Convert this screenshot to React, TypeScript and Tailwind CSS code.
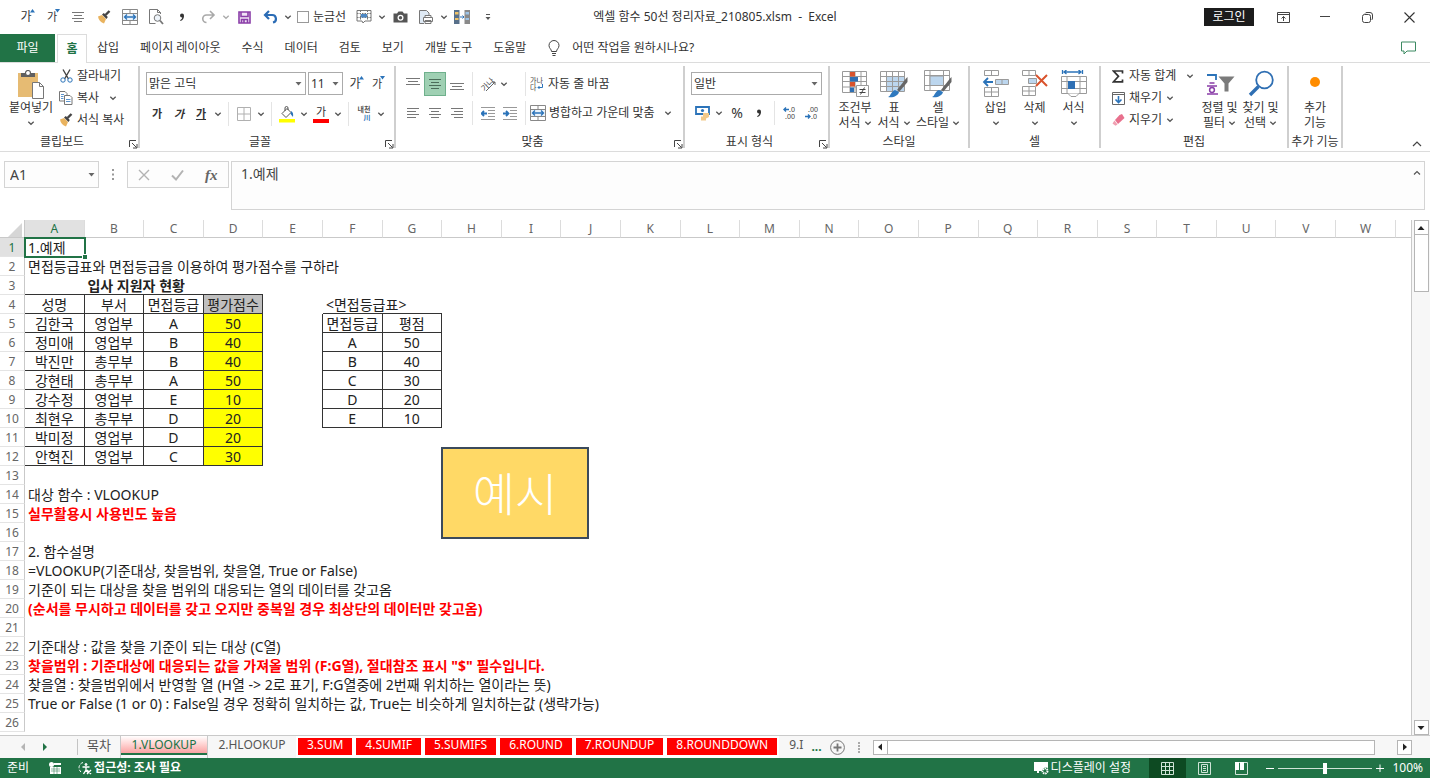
import React from 'react';
import { clsx } from 'clsx';

type Kids = { children?: React.ReactNode; className?: string };

/* ---------- small building blocks ---------- */

const Chevron = ({ up = false }: { up?: boolean }) => (
  <svg width="8" height="8" viewBox="0 0 8 8" fill="none" stroke="#555" strokeWidth="1.2" aria-hidden="true">
    <path d={up ? 'M1 5.5 4 2.5 7 5.5' : 'M1.3 2.7 4 5.3 6.7 2.7'} />
  </svg>
);

const Caret = () => (
  <svg width="7" height="4" viewBox="0 0 7 4" fill="#666" aria-hidden="true">
    <path d="M.5 0h6l-3 3.6z" />
  </svg>
);

const IconButton = ({ children, label, className }: Kids & { label: string }) => (
  <button type="button" aria-label={label} className={clsx('flex h-6 w-[22px] shrink-0 items-center justify-center', className)}>
    {children}
  </button>
);

const DropButton = ({ label, className = 'w-3' }: { label: string; className?: string }) => (
  <button type="button" aria-label={label} className={clsx('flex h-6 shrink-0 items-center justify-center', className)}>
    <Chevron />
  </button>
);

const Divider = () => <span className="mx-1 h-6 w-px shrink-0 bg-[#e4e4e4]" />;

const SelectBox = ({ label, value, className }: { label: string; value: string; className: string }) => (
  <div className={clsx('relative', className)}>
    <select aria-label={label} className="h-[23px] w-full appearance-none border border-[#ababab] bg-white pl-[2px] text-[#333]">
      <option>{value}</option>
    </select>
    <span className="pointer-events-none absolute top-[10px] right-1">
      <Caret />
    </span>
  </div>
);

const Group = ({ title, launcher = false, className, children }: Kids & { title: string; launcher?: boolean }) => (
  <section aria-label={title} className={clsx('flex h-[82px] shrink-0 flex-col border-r-2 border-[#cfcfcf]', className)}>
    <div className="flex-1">{children}</div>
    <div className="flex h-3 items-center">
      <span className="flex-1 text-center leading-3 whitespace-nowrap">{title}</span>
      {launcher && (
        <button type="button" aria-label={`${title} 설정`} className="flex w-[14px] justify-end pt-1">
          <svg width="9" height="9" viewBox="0 0 9 9" fill="none" stroke="#444">
            <path d="M.5 7V.5H7M3 3l4.500 4.500M8 4v4H4" />
          </svg>
        </button>
      )}
    </div>
  </section>
);

const BigButton = ({ icon, lines, arrow = 'none', className }: { icon: React.ReactNode; lines: string[]; arrow?: 'none' | 'inline' | 'below'; className: string }) => (
  <button type="button" className={clsx('flex shrink-0 flex-col items-center pt-[2px]', className)}>
    <span className="flex h-8 items-center justify-center">{icon}</span>
    {lines.map((line, i) => (
      <span key={line} className="flex h-[15px] items-center gap-[3px] leading-[15px] whitespace-nowrap">
        {line}
        {arrow === 'inline' && i === lines.length - 1 && <Chevron />}
      </span>
    ))}
    {arrow === 'below' && (
      <span className="flex h-[15px] items-center">
        <Chevron />
      </span>
    )}
  </button>
);

const RowButton = ({ icon, children, arrow = false, wide = false }: Kids & { icon: React.ReactNode; arrow?: boolean; wide?: boolean }) => (
  <button type="button" className="flex h-[18px] items-center whitespace-nowrap">
    <span className="mr-1 flex w-[14px] justify-center">{icon}</span>
    {children}
    {arrow && (
      <span className={wide ? 'ml-[10px]' : 'ml-1'}>
        <Chevron />
      </span>
    )}
  </button>
);

/* ---------- icons ---------- */

const GrowFont = ({ small = false }: { small?: boolean }) => (
  <span className="relative text-[#333]">
    <span className={small ? 'text-[11px]' : 'text-[12px]'}>가</span>
    <svg className="absolute top-0 -right-[3px]" width="5" height="4" viewBox="0 0 5 4" fill="#2b73b9">
      <path d={small ? 'M0 0h5L2.500 3.500z' : 'M2.500 0 5 3.500H0z'} />
    </svg>
  </span>
);

const Lines = ({ rows, stroke = '#777' }: { rows: number[][]; stroke?: string }) => (
  <svg width="14" height="14" viewBox="0 0 14 14" stroke={stroke} fill="none">
    {rows.map(([x1, x2, y]) => (
      <path key={y} d={`M${x1} ${y}.5H${x2}`} />
    ))}
  </svg>
);

const CommaIcon = () => (
  <svg width="6" height="9" viewBox="0 0 6 9" fill="#333">
    <circle cx="3" cy="2.500" r="2" />
    <path d="M5 2.500C5 5.500 4 7 1.500 8l-.4-.8C2.500 6.500 3.200 5.500 3.200 4z" />
  </svg>
);

const Brush = () => (
  <svg width="14" height="14" viewBox="0 0 14 14" fill="none">
    <path d="M1 6.500 5 5l4 4-2 4.500C4 12.500 1.500 10 1 6.500z" fill="#e9b35f" />
    <path d="m5 4.500 1.800-1.500 4 4L9.500 9z" fill="#444" />
    <path d="m8.500 5 4-4" stroke="#444" strokeWidth="2.400" />
  </svg>
);

const MergeIcon = () => (
  <svg width="16" height="16" viewBox="0 0 16 16" fill="none" stroke="#888">
    <path d="M.5.5h15v15H.5zM.5 4.500h15M.5 11.500h15M8 .5v4M8 11.500v4" />
    <rect x="1" y="5" width="14" height="6" fill="#eaf3fb" stroke="none" />
    <path d="M2.500 8h11M5 5.500 2.500 8 5 10.500M11 5.500 13.500 8 11 10.500" stroke="#2b73b9" strokeWidth="1.300" />
  </svg>
);

const PreviewIcon = () => (
  <svg width="16" height="16" viewBox="0 0 16 16" fill="none" stroke="#777">
    <path d="M12.500 5V3.500l-3-3h-8v14h6M9.500.5v3h3" />
    <circle cx="9.500" cy="9" r="3.300" fill="#eef4fa" />
    <path d="m12 11.500 3 3.500" strokeWidth="1.800" />
  </svg>
);

const RedoIcon = () => (
  <svg width="15" height="14" viewBox="0 0 15 14" fill="none" stroke="#a9a9a9" strokeWidth="1.600">
    <path d="M9 1l4 4-4 4M13 5H5.500a3.700 3.700 0 0 0 0 7.500" />
  </svg>
);

const UndoIcon = () => (
  <svg width="15" height="14" viewBox="0 0 15 14" fill="none" stroke="#2b6cb5" strokeWidth="2.200">
    <path d="M6 1 2 5l4 4M2 5h7a3.800 3.800 0 0 1 1 7.500" />
  </svg>
);

const SaveIcon = () => (
  <svg width="13" height="13" viewBox="0 0 13 13" fill="none" stroke="#8a3ea8" strokeWidth="1.600">
    <path d="M1 1h11v11H1z" fill="#f1e4f6" />
    <path d="M3 1v4.500h7V1M3.500 12V8.500h6V12M6 9v3" />
  </svg>
);

const FormGridIcon = () => (
  <svg width="16" height="14" viewBox="0 0 16 14" fill="none" stroke="#777">
    <path d="M1 .5h14v10.500H9l-2 2-1-2H1z" fill="#fff" />
    <path d="M1 3.500h14M1 7.500h14M4.500.5v10M11.500.5v10" strokeDasharray="1.500 1" />
    <path d="M5 4h6v3.500H5z" fill="#4e88c4" stroke="none" />
  </svg>
);

const CameraIcon = () => (
  <svg width="15" height="12" viewBox="0 0 15 12" fill="#555">
    <path d="M.5 2.500h3.500L5.500.5h4L11 2.500h3.500v9H.5z" />
    <circle cx="7.500" cy="6.800" r="3" fill="#fff" />
    <circle cx="7.500" cy="6.800" r="1.700" />
  </svg>
);

const PrintIcon = () => (
  <svg width="16" height="16" viewBox="0 0 16 16" fill="none" stroke="#777">
    <path d="M6 14.500H1.500V1.500h7l2.500 2.500v2" fill="#dfeaf5" />
    <path d="M5.500 8.500h9v4h-9zM7 8.500v-2h6v2M7 11.500h6v3H7z" fill="#fff" />
  </svg>
);

const CompareIcon = () => (
  <svg width="16" height="14" viewBox="0 0 16 14" fill="none">
    <path d="M0 0h5.500v14H0z" fill="#58708a" />
    <path d="M10.500 0H16v14h-5.500z" fill="#8a8a8a" />
    <path d="M1 2h3.500v2.500H1zM1 8h3.500v2H1z" fill="#f0c267" />
    <path d="M11.500 2H15v2.500h-3.500zM11.500 8H15v2h-3.500z" fill="#9cc3e8" />
    <path d="M6 7h4M8.500 5.500 10 7 8.500 8.500" stroke="#2b73b9" />
  </svg>
);

const PasteIcon = () => (
  <svg width="28" height="29" viewBox="0 0 28 29" fill="none">
    <path d="M1 3h20v24H1z" fill="#e6bb73" />
    <path d="M4 3h14v4H4z" fill="#5f5f5f" />
    <circle cx="11" cy="3" r="2.500" stroke="#5f5f5f" strokeWidth="1.200" fill="#fff" />
    <path d="M15.500 12.500h7l4 4v12h-11z" fill="#fff" stroke="#777" />
    <path d="M22.500 12.500v4h4" stroke="#777" />
  </svg>
);

const CutIcon = () => (
  <svg width="13" height="14" viewBox="0 0 13 14" fill="none">
    <path d="M3 .5 8.500 10M10 .5 4.500 10" stroke="#444" strokeWidth="1.400" />
    <circle cx="3" cy="11" r="2.200" stroke="#2b73b9" />
    <circle cx="10" cy="11" r="2.200" stroke="#2b73b9" />
  </svg>
);

const CopyIcon = () => (
  <svg width="14" height="14" viewBox="0 0 14 14" fill="#fff" stroke="#777">
    <path d="M.5.5H6l2 2V10H.5z" />
    <path d="M5.500 4.500H11l2 2v7H5.500z" />
    <path d="M2 3.500h3M2 5.500h2.500M2 7.500h2.500M7 8.500h4.500M7 10.500h4.500" stroke="#5b95d0" />
  </svg>
);

const BorderIcon = () => (
  <svg width="14" height="14" viewBox="0 0 14 14" fill="none" stroke="#b0b0b0">
    <path d="M.5.5h13v13H.5zM7 .5v13M.5 7h13" />
  </svg>
);

const FillIcon = () => (
  <svg width="16" height="17" viewBox="0 0 16 17" fill="none">
    <path d="M0 13h16v3.500H0z" fill="#ffff00" />
    <path d="m3 7.500 5-5 4 4-5 5z" fill="#fff" stroke="#555" />
    <path d="M6 5V2a1.500 1.500 0 0 1 3 0v2" stroke="#555" />
    <path d="M12 5c2 1 2.500 3 2 6-1-1.500-2-2-2.500-3.500z" fill="#2b73b9" />
  </svg>
);

const PhoneticIcon = () => (
  <span className="flex flex-col items-end text-[7px] leading-[8px] font-bold">
    <span className="text-[#555]">내천</span>
    <span className="text-[#2b73b9]">川</span>
  </span>
);

const OrientationIcon = () => (
  <svg className="overflow-visible" width="16" height="16" viewBox="0 0 16 16">
    <text x="0" y="11" fontSize="8" fill="#444" transform="rotate(-45 8 8)">가나</text>
    <path d="M6 15 15 6M12 6h3v3" stroke="#666" fill="none" />
  </svg>
);

const IndentIcon = ({ right = false }: { right?: boolean }) => (
  <svg width="14" height="13" viewBox="0 0 14 13" fill="none">
    <path d="M0 .5h14M7 3.500h7M7 6.500h7M7 9.500h7M0 12.500h14" stroke="#999" />
    <path d={right ? 'M0 6.500h5M3 4l2.500 2.500L3 9' : 'M6 6.500H1M3 4 .5 6.500 3 9'} stroke="#2b73b9" strokeWidth="1.800" />
  </svg>
);

const WrapIcon = () => (
  <svg width="14" height="16" viewBox="0 0 14 16">
    <text x="0" y="7" fontSize="7" fill="#444">가나</text>
    <text x="0" y="14" fontSize="7" fill="#444">다</text>
    <path d="M12.500 8v3.500H8M9.500 10 8 11.500 9.500 13" stroke="#2b73b9" fill="none" />
  </svg>
);

const MoneyIcon = () => (
  <svg width="15" height="15" viewBox="0 0 15 15" fill="none">
    <path d="M1 1h13v7H1z" stroke="#2b73b9" strokeWidth="1.800" fill="#fff" />
    <circle cx="7.500" cy="4.500" r="1.600" fill="#2b73b9" />
    <path d="M8 7h6v4l-3 1.500v2H6v-4h2z" fill="#f2c98a" />
  </svg>
);

const DecimalIcon = ({ less = false }: { less?: boolean }) => (
  <svg width="14" height="14" viewBox="0 0 14 14">
    <text x={less ? 3 : 6} y="6" fontSize="7" fill="#444">{less ? '.00' : '.0'}</text>
    <text x={less ? 6 : 2} y="13" fontSize="7" fill="#444">{less ? '.0' : '.00'}</text>
    <path d={less ? 'M0 10.500h5M3 8.500l2 2-2 2' : 'M6 3.500H1M3 1.500l-2 2 2 2'} stroke="#2b73b9" strokeWidth="1.400" fill="none" />
  </svg>
);

const ConditionalIcon = () => (
  <svg width="28" height="28" viewBox="0 0 28 28" fill="none" stroke="#9a9a9a">
    <path d="M1.500 1.500h24v21h-24zM1.500 6.500h24M1.500 11.500h24M1.500 17h24M9 1.500v21M14 1.500v21M20 1.500v21" />
    <path d="M9 2h5v4.500H9zM9 12h5v4.500H9z" fill="#d9532c" stroke="none" />
    <path d="M9 7h8v4.500H9zM9 17.500h4V22H9z" fill="#2f6fb3" stroke="none" />
    <path d="M15.500 15.500h12v11h-12z" fill="#fff" />
    <path d="M18.500 19.500h6M18.500 22.500h6M23.500 17.500l-4 7" stroke="#444" />
  </svg>
);

const PaintBrush = () => (
  <>
    <path d="m18 20 9-11.500L28.500 7v5l-8 9.500z" fill="#666" stroke="none" />
    <path d="M9 27c3-1 3-6 7-7l4 2c-1 4-6 6-11 5z" fill="#2f79bf" stroke="none" />
  </>
);

const TableStyleIcon = () => (
  <svg width="30" height="28" viewBox="0 0 30 28" fill="none" stroke="#9a9a9a">
    <path d="M7 7h18v14H7z" fill="#bcd6ee" stroke="none" />
    <path d="M1.500 1.500h24v20h-24zM1.500 6.500h24M1.500 11.500h24M1.500 16.500h24M7.500 1.500v20M13.500 1.500v20M19.500 1.500v20" />
    <PaintBrush />
  </svg>
);

const CellStyleIcon = () => (
  <svg width="30" height="28" viewBox="0 0 30 28" fill="none" stroke="#9a9a9a">
    <path d="M1.500.5h25v20h-25zM1.500 5.500h25M1.500 15.500h25M7 .5v20M20.500.5v20" />
    <path d="M7 6h13.500v9.500H7z" fill="#bcd6ee" />
    <PaintBrush />
  </svg>
);

const InsertIcon = () => (
  <svg width="28" height="28" viewBox="0 0 28 28" fill="none" stroke="#9a9a9a">
    <path d="M2.500.5h14v5h-14zM9.500.5v5M2.500 17.500h14v9h-14zM2.500 22h14M9.500 17.500v9" />
    <path d="M13.500 9.500h13v5h-13z" fill="#bcd6ee" />
    <path d="M20 9.500v5" />
    <path d="M11 12H2M6 8l-4 4 4 4" stroke="#2b73b9" strokeWidth="1.800" />
  </svg>
);

const DeleteIcon = () => (
  <svg width="28" height="28" viewBox="0 0 28 28" fill="none" stroke="#9a9a9a">
    <path d="M1.500.5h13v5h-13zM8 .5v5M1.500 16.500h13v9h-13zM1.500 21h13M8 16.500v9" />
    <path d="M7.500 8.500h8v5h-8z" fill="#bcd6ee" />
    <path d="m15 5 11 11M26 5 15 16" stroke="#d9532c" strokeWidth="2" />
  </svg>
);

const FormatIcon = () => (
  <svg width="28" height="28" viewBox="0 0 28 28" fill="none" stroke="#9a9a9a">
    <path d="M1.500 6.500h25v17h-25zM1.500 11.500h25M1.500 18.500h25M7 6.500v17M20 6.500v17" />
    <path d="M8 11h7v8H8z" fill="#2f6fb3" stroke="none" />
    <path d="M2 23.500h6l3 3h5l3-3" fill="#fff" />
    <path d="M4 2h17M6.500 0 4 2l2.500 2M18.500 0 21 2l-2.500 2M2.500 0v4M22.500 0v4" stroke="#2b73b9" strokeWidth="1.300" />
  </svg>
);

const SigmaIcon = () => (
  <svg width="12" height="13" viewBox="0 0 12 13" fill="none" stroke="#333" strokeWidth="1.700">
    <path d="M10.500 3.500V1H1.500l5 5.300-5 5.500h9V9.500" />
  </svg>
);

const FillDownIcon = () => (
  <svg width="13" height="13" viewBox="0 0 13 13" fill="none" stroke="#666">
    <path d="M.5.5h12v12H.5zM.5 2.500h12" />
    <path d="M6.500 4v6.500M3.500 7.500l3 3 3-3" stroke="#2b73b9" strokeWidth="1.600" />
  </svg>
);

const EraserIcon = () => (
  <svg width="13" height="12" viewBox="0 0 13 12">
    <path d="M7.500 1 10 0l2.500 4L6 10 3 6z" fill="#e8708d" />
    <path d="m2.500 6.500 3 4-2 1.200L.5 9.500z" fill="#f0a0b2" />
  </svg>
);

const SortIcon = () => (
  <svg width="30" height="28" viewBox="0 0 30 28" fill="none">
    <path d="M2 5h9v5" stroke="#2b73b9" strokeWidth="1.800" />
    <path d="M4.500 13h5M2 16h10M2 24h11" stroke="#8a3ea8" strokeWidth="1.500" />
    <circle cx="7" cy="20" r="2.400" stroke="#8a3ea8" strokeWidth="1.500" />
    <path d="M13.500 6.500h16l-6 7v8h-4v-8z" fill="#7b7b7b" />
  </svg>
);

const FindIcon = () => (
  <svg width="28" height="28" viewBox="0 0 28 28" fill="none" stroke="#2f6fb3">
    <circle cx="17.500" cy="10" r="8.300" strokeWidth="1.800" />
    <path d="M11.500 16.500 3 25" strokeWidth="3.400" />
  </svg>
);

/* ---------- title bar and ribbon ---------- */

const QuickButton = ({ label, children }: Kids & { label: string }) => (
  <button type="button" aria-label={label} className="flex h-7 w-[26px] shrink-0 items-center justify-center">
    {children}
  </button>
);

const CENTERED = [[1, 13, 2], [3, 11, 5], [1, 13, 8], [3, 11, 11]];

const TitleBar = () => (
  <header className="grid h-[34px] grid-cols-[1fr_auto_1fr] items-center">
    <div className="flex items-center pl-[13px]">
      <QuickButton label="글꼴 크기 크게"><GrowFont /></QuickButton>
      <QuickButton label="글꼴 크기 작게"><GrowFont small /></QuickButton>
      <QuickButton label="가운데 맞춤"><Lines rows={CENTERED} /></QuickButton>
      <QuickButton label="서식 복사"><Brush /></QuickButton>
      <QuickButton label="병합하고 가운데 맞춤"><MergeIcon /></QuickButton>
      <QuickButton label="인쇄 미리 보기"><PreviewIcon /></QuickButton>
      <QuickButton label="쉼표 스타일"><CommaIcon /></QuickButton>
      <QuickButton label="다시 실행"><RedoIcon /></QuickButton>
      <DropButton label="다시 실행 목록" className="w-[10px] opacity-50" />
      <QuickButton label="저장"><SaveIcon /></QuickButton>
      <QuickButton label="실행 취소"><UndoIcon /></QuickButton>
      <DropButton label="실행 취소 목록" className="w-[10px]" />
      <label className="flex items-center gap-1 pr-[5px] pl-1 whitespace-nowrap">
        <input type="checkbox" className="size-3 appearance-none border border-[#999] bg-white" />
        눈금선
      </label>
      <QuickButton label="양식 컨트롤"><FormGridIcon /></QuickButton>
      <DropButton label="양식 컨트롤 목록" className="w-[10px]" />
      <QuickButton label="카메라"><CameraIcon /></QuickButton>
      <QuickButton label="인쇄"><PrintIcon /></QuickButton>
      <DropButton label="인쇄 목록" className="w-[10px]" />
      <QuickButton label="나란히 비교"><CompareIcon /></QuickButton>
      <QuickButton label="빠른 실행 도구 모음 사용자 지정">
        <svg width="6" height="7" viewBox="0 0 6 7" fill="#555"><path d="M1 0h4v1H1zM.5 3h5L3 6z" /></svg>
      </QuickButton>
    </div>
    <h1 className="whitespace-pre text-[#333]">엑셀 함수 50선 정리자료_210805.xlsm  -  Excel</h1>
    <div className="flex items-center justify-end">
      <button type="button" className="mr-2 h-[18px] w-[50px] bg-[#1c1c1c] leading-[18px] text-white">로그인</button>
      <button type="button" aria-label="리본 메뉴 표시 옵션" className="flex w-[42px] justify-center">
        <svg width="13" height="11" viewBox="0 0 13 11" fill="none" stroke="#444"><path d="M.5.5h12v10H.5zM.5 2.500h12M6.500 9V4.500M4.500 6.500l2-2 2 2" /></svg>
      </button>
      <button type="button" aria-label="최소화" className="flex w-[42px] justify-center">
        <svg width="10" height="11" viewBox="0 0 10 11" stroke="#444"><path d="M0 4.500h10" /></svg>
      </button>
      <button type="button" aria-label="이전 크기로 복원" className="flex w-[42px] justify-center">
        <svg width="11" height="11" viewBox="0 0 11 11" fill="none" stroke="#444"><rect x=".5" y="2.500" width="8" height="8" rx="2" /><path d="M3 1.500Q3.500.5 5 .5h3q2.500 0 2.500 2.500v3q0 1.500-1 2" /></svg>
      </button>
      <button type="button" aria-label="닫기" className="flex w-[42px] justify-center">
        <svg width="11" height="11" viewBox="0 0 11 11" stroke="#333" strokeWidth="1.100"><path d="m.5.500 10 10M10.500.5l-10 10" /></svg>
      </button>
    </div>
  </header>
);

const MENU = ['삽입', '페이지 레이아웃', '수식', '데이터', '검토', '보기', '개발 도구', '도움말'];

const MenuTabs = () => (
  <nav className="flex h-7 items-stretch">
    <button type="button" className="w-[55px] bg-[#217346] text-white">파일</button>
    <button type="button" className="relative z-10 -mb-px ml-[2px] w-[30px] border border-b-0 border-[#dcdcdc] bg-white font-bold text-[#217346]">홈</button>
    <div className="flex gap-px">
      {MENU.map((name) => (
        <button key={name} type="button" className="px-[10px] whitespace-nowrap">{name}</button>
      ))}
    </div>
    <button type="button" className="flex items-center gap-3 pl-3 whitespace-nowrap">
      <svg width="12" height="16" viewBox="0 0 12 16" fill="none" stroke="#444">
        <path d="M3.500 11.500C3.500 9 1 8.500 1 5.500a5 5 0 0 1 10 0c0 3-2.500 3.500-2.500 6zM4 13.500h4M4.500 15.500h3" />
      </svg>
      어떤 작업을 원하시나요?
    </button>
    <button type="button" aria-label="메모" className="mr-[14px] ml-auto">
      <svg width="15" height="14" viewBox="0 0 15 14" fill="none" stroke="#3d8a62"><path d="M.5 1h14v9H6l-3 3v-3H.5z" /></svg>
    </button>
  </nav>
);

const Ribbon = () => (
  <div className="flex border-y border-[#dcdcdc] py-[3px]">
    <Group title="클립보드" launcher className="w-[140px]">
      <div className="flex">
        <BigButton icon={<PasteIcon />} lines={['붙여넣기']} arrow="below" className="ml-2 w-[46px]" />
        <div className="ml-[5px] flex flex-col gap-1 pt-px">
          <RowButton icon={<CutIcon />}>잘라내기</RowButton>
          <RowButton icon={<CopyIcon />} arrow wide>복사</RowButton>
          <RowButton icon={<Brush />}>서식 복사</RowButton>
        </div>
      </div>
    </Group>

    <Group title="글꼴" launcher className="w-[256px]">
      <div className="flex flex-col gap-[6px] pt-[6px] pl-[6px]">
        <div className="flex">
          <SelectBox label="글꼴" value="맑은 고딕" className="w-[160px]" />
          <SelectBox label="글꼴 크기" value="11" className="mr-[1px] ml-[2px] w-[35px]" />
          <IconButton label="크게"><GrowFont /></IconButton>
          <IconButton label="작게"><GrowFont small /></IconButton>
        </div>
        <div className="flex">
          <IconButton label="굵게" className="text-[11px] font-bold">가</IconButton>
          <IconButton label="기울임꼴" className="text-[11px] font-bold italic">가</IconButton>
          <IconButton label="밑줄" className="text-[11px] font-bold underline">가</IconButton>
          <DropButton label="밑줄 종류" />
          <Divider />
          <IconButton label="테두리"><BorderIcon /></IconButton>
          <DropButton label="테두리 종류" />
          <Divider />
          <IconButton label="채우기 색"><FillIcon /></IconButton>
          <DropButton label="채우기 색 목록" />
          <IconButton label="글꼴 색">
            <span className="flex h-[17px] w-4 flex-col items-center border-b-4 border-[#f00] text-[11px] leading-3">가</span>
          </IconButton>
          <DropButton label="글꼴 색 목록" />
          <Divider />
          <IconButton label="윗주"><PhoneticIcon /></IconButton>
          <DropButton label="윗주 목록" />
        </div>
      </div>
    </Group>

    <Group title="맞춤" launcher className="w-[289px]">
      <div className="flex flex-col gap-[6px] pt-[6px] pl-[6px]">
        <div className="flex h-[23px] items-center">
          <IconButton label="위쪽 맞춤"><Lines rows={[[0, 14, 1], [2, 12, 4], [0, 14, 7]]} /></IconButton>
          <IconButton label="세로 가운데 맞춤" className="border border-[#6fb08c] bg-[#9fd0b3]"><Lines stroke="#4c6e5a" rows={CENTERED} /></IconButton>
          <IconButton label="아래쪽 맞춤"><Lines rows={[[0, 14, 6], [2, 12, 9], [0, 14, 12]]} /></IconButton>
          <Divider />
          <IconButton label="방향"><OrientationIcon /></IconButton>
          <DropButton label="방향 목록" className="w-[22px] pr-3" />
          <Divider />
          <button type="button" className="flex items-center gap-1 whitespace-nowrap"><WrapIcon />자동 줄 바꿈</button>
        </div>
        <div className="flex">
          <IconButton label="왼쪽 맞춤"><Lines rows={[[1, 13, 2], [1, 10, 5], [1, 13, 8], [1, 10, 11]]} /></IconButton>
          <IconButton label="가운데 맞춤"><Lines rows={CENTERED} /></IconButton>
          <IconButton label="오른쪽 맞춤"><Lines rows={[[1, 13, 2], [4, 13, 5], [1, 13, 8], [4, 13, 11]]} /></IconButton>
          <Divider />
          <IconButton label="내어쓰기"><IndentIcon /></IconButton>
          <IconButton label="들여쓰기"><IndentIcon right /></IconButton>
          <Divider />
          <button type="button" className="flex items-center gap-[3px] whitespace-nowrap"><MergeIcon />병합하고 가운데 맞춤</button>
          <DropButton label="병합 목록" className="w-[26px]" />
        </div>
      </div>
    </Group>

    <Group title="표시 형식" launcher className="w-[145px]">
      <div className="flex flex-col gap-[6px] pt-[6px] pl-[6px]">
        <SelectBox label="표시 형식" value="일반" className="w-[131px]" />
        <div className="flex">
          <IconButton label="회계 표시 형식"><MoneyIcon /></IconButton>
          <DropButton label="통화 목록" />
          <IconButton label="백분율" className="ml-px text-[14px]">%</IconButton>
          <IconButton label="쉼표"><CommaIcon /></IconButton>
          <Divider />
          <IconButton label="자릿수 늘림"><DecimalIcon /></IconButton>
          <IconButton label="자릿수 줄임"><DecimalIcon less /></IconButton>
        </div>
      </div>
    </Group>

    <Group title="스타일" className="w-[140px]">
      <div className="flex pl-1">
        <BigButton icon={<ConditionalIcon />} lines={['조건부', '서식']} arrow="inline" className="w-[42px]" />
        <BigButton icon={<TableStyleIcon />} lines={['표', '서식']} arrow="inline" className="w-[36px]" />
        <BigButton icon={<CellStyleIcon />} lines={['셀', '스타일']} arrow="inline" className="w-[52px]" />
      </div>
    </Group>

    <Group title="셀" className="w-[131px]">
      <div className="flex pl-[6px]">
        <BigButton icon={<InsertIcon />} lines={['삽입']} arrow="below" className="w-[39px]" />
        <BigButton icon={<DeleteIcon />} lines={['삭제']} arrow="below" className="w-[39px]" />
        <BigButton icon={<FormatIcon />} lines={['서식']} arrow="below" className="w-[39px]" />
      </div>
    </Group>

    <Group title="편집" className="w-[188px]">
      <div className="flex">
        <div className="flex w-[98px] flex-col gap-1 pt-px pl-[10px]">
          <RowButton icon={<SigmaIcon />} arrow wide>자동 합계</RowButton>
          <RowButton icon={<FillDownIcon />} arrow>채우기</RowButton>
          <RowButton icon={<EraserIcon />} arrow>지우기</RowButton>
        </div>
        <BigButton icon={<SortIcon />} lines={['정렬 및', '필터']} arrow="inline" className="w-[41px]" />
        <BigButton icon={<FindIcon />} lines={['찾기 및', '선택']} arrow="inline" className="w-[41px]" />
      </div>
    </Group>

    <Group title="추가 기능" className="w-[54px]">
      <BigButton
        icon={<svg width="12" height="16" viewBox="0 0 12 16"><circle cx="6" cy="6" r="5" fill="#ff8c00" /></svg>}
        lines={['추가', '기능']}
        className="w-full"
      />
    </Group>

    <button type="button" aria-label="리본 메뉴 축소" className="mr-2 ml-auto self-end">
      <svg width="10" height="8" viewBox="0 0 10 8" fill="none" stroke="#444" strokeWidth="1.200"><path d="m1 6 4-4 4 4" /></svg>
    </button>
  </div>
);

const FormulaBar = () => (
  <div className="flex items-start pt-[9px] pr-[5px] pb-[10px] pl-1">
    <div className="relative w-[95px]">
      <input aria-label="이름 상자" defaultValue="A1" className="h-[27px] w-full border border-[#d4d4d4] bg-[#fdfdfd] pl-[5px] text-[14px] text-[#444]" />
      <span className="pointer-events-none absolute top-3 right-1"><Caret /></span>
    </div>
    <svg className="mx-3 mt-2" width="4" height="11" viewBox="0 0 4 11" fill="#999"><path d="M1 0h2v2H1zM1 4.500h2v2H1zM1 9h2v2H1z" /></svg>
    <div className="flex h-[27px] w-[102px] items-center justify-around border border-[#d4d4d4] bg-[#fdfdfd]">
      <button type="button" aria-label="취소">
        <svg width="12" height="12" viewBox="0 0 12 12" stroke="#b3b3b3" strokeWidth="1.400"><path d="m1 1 10 10M11 1 1 11" /></svg>
      </button>
      <button type="button" aria-label="입력">
        <svg width="13" height="12" viewBox="0 0 13 12" fill="none" stroke="#b3b3b3" strokeWidth="2"><path d="m1 6.500 4 4L12 1.500" /></svg>
      </button>
      <button type="button" aria-label="함수 삽입" className="font-['Liberation_Serif',serif] text-[15px] leading-4 font-bold text-[#666] italic">fx</button>
    </div>
    <div className="relative ml-[2px] flex-1">
      <textarea aria-label="수식 입력줄" defaultValue="1.예제" className="block h-[49px] w-full resize-none border border-[#d4d4d4] bg-[#fdfdfd] px-[9px] pt-[3px] text-[14px] leading-[18px] text-[#444]" />
      <button type="button" aria-label="수식 입력줄 축소" className="absolute top-2 right-1"><Chevron up /></button>
    </div>
  </div>
);

/* ---------- worksheet ---------- */

const COLUMNS = 'ABCDEFGHIJKLMNOPQRSTUVW'.split('');
const ROWS = Array.from({ length: 26 }, (_, i) => i + 1);

const APPLICANTS = [
  ['성명', '부서', '면접등급', '평가점수'],
  ['김한국', '영업부', 'A', '50'],
  ['정미애', '영업부', 'B', '40'],
  ['박진만', '총무부', 'B', '40'],
  ['강현태', '총무부', 'A', '50'],
  ['강수정', '영업부', 'E', '10'],
  ['최현우', '총무부', 'D', '20'],
  ['박미정', '영업부', 'D', '20'],
  ['안혁진', '영업부', 'C', '30'],
];

const GRADES = [
  ['면접등급', '평점'],
  ['A', '50'],
  ['B', '40'],
  ['C', '30'],
  ['D', '20'],
  ['E', '10'],
];

const NOTES: Record<number, { text: string; strong?: boolean }> = {
  2: { text: '면접등급표와 면접등급을 이용하여 평가점수를 구하라' },
  14: { text: '대상 함수 : VLOOKUP' },
  15: { text: '실무활용시 사용빈도 높음', strong: true },
  17: { text: '2. 함수설명' },
  18: { text: '=VLOOKUP(기준대상, 찾을범위, 찾을열, True or False)' },
  19: { text: '기준이 되는 대상을 찾을 범위의 대응되는 열의 데이터를 갖고옴' },
  20: { text: '(순서를 무시하고 데이터를 갖고 오지만 중복일 경우 최상단의 데이터만 갖고옴)', strong: true },
  22: { text: '기준대상 : 값을 찾을 기준이 되는 대상 (C열)' },
  23: { text: '찾을범위 : 기준대상에 대응되는 값을 가져올 범위 (F:G열), 절대참조 표시 "$" 필수입니다.', strong: true },
  24: { text: '찾을열 : 찾을범위에서 반영할 열 (H열 -> 2로 표기, F:G열중에 2번째 위치하는 열이라는 뜻)' },
  25: { text: 'True or False (1 or 0) : False일 경우 정확히 일치하는 값, True는 비슷하게 일치하는값 (생략가능)' },
};

const Cell = ({ row, col }: { row: number; col: number }) => {
  const note = NOTES[row];
  if (row === 1 && col === 0) {
    return (
      <td className="relative p-0 pl-[3px]">
        1.예제
        <span className="absolute -inset-x-px -top-px -bottom-px border-2 border-[#217346]" />
        <span className="absolute -right-[2px] -bottom-[2px] size-[5px] border-t border-l border-white bg-[#217346]" />
      </td>
    );
  }
  if (note && col === 0) {
    return <td className={clsx('p-0 pl-[3px]', note.strong && 'font-bold text-[#f00]')}>{note.text}</td>;
  }
  if (row === 3 && col === 0) {
    return <td colSpan={4} className="border-b border-[#333] p-0 pr-4 text-center font-bold">입사 지원자 현황</td>;
  }
  if (row >= 4 && row <= 12 && col < 4) {
    return (
      <td
        className={clsx(
          'border-r border-b border-[#333] p-0 text-center',
          col === 3 && (row === 4 ? 'bg-[#bfbfbf]' : 'bg-[#ff0]'),
        )}
      >
        {APPLICANTS[row - 4][col]}
      </td>
    );
  }
  if (row === 4 && (col === 5 || col === 6)) {
    return <td className="border-b border-[#333] p-0 pl-[3px]">{col === 5 && '<면접등급표>'}</td>;
  }
  if (row >= 5 && row <= 10 && col >= 4 && col <= 6) {
    if (col === 4) return <td className="border-r border-[#333] p-0" />;
    return <td className="border-r border-b border-[#333] p-0 text-center">{GRADES[row - 5][col - 5]}</td>;
  }
  return <td className="p-0" />;
};

const ScrollButton = ({ label, d, className }: { label: string; d: string; className?: string }) => (
  <button type="button" aria-label={label} className={clsx('flex size-[15px] shrink-0 items-center justify-center border border-[#b5b5b5] bg-white', className)}>
    <svg width="8" height="8" viewBox="0 0 8 8"><path d={d} fill="#222" /></svg>
  </button>
);

const Sheet = () => (
  <main className="relative flex flex-1 border-b border-[#c9c9c9]">
    <div className="flex-1 border-r border-[#c9c9c9]">
      <table className="w-full table-fixed border-separate border-spacing-0 text-[14px] leading-[17px] whitespace-nowrap text-[#222]">
        <colgroup>
          <col className="w-[25px]" />
          {COLUMNS.map((c) => <col key={c} />)}
          <col className="w-[15px]" />
        </colgroup>
        <thead>
          <tr className="h-[18px] text-[12px] text-[#666]">
            <th className="border-r border-b border-[#c9c9c9] p-0">
              <svg className="mt-[2px] ml-2" width="14" height="14" viewBox="0 0 14 14"><path d="M14 0v14H0z" fill="#d6d6d6" /></svg>
            </th>
            {COLUMNS.map((c, i) => (
              <th
                key={c}
                scope="col"
                className={clsx('border-r border-b p-0 font-normal', i === 0 ? 'border-r-[#dcdcdc] border-b-[#217346] bg-[#e1e1e1] text-[#217346]' : 'border-r-[#dcdcdc] border-b-[#c9c9c9]')}
              >
                {c}
              </th>
            ))}
            <th className="border-b border-[#c9c9c9] p-0" />
          </tr>
        </thead>
        <tbody>
          {ROWS.map((r) => (
            <tr key={r} className="h-[19px]">
              <th
                scope="row"
                className={clsx('border-r border-b border-r-[#c9c9c9] border-b-[#e4e4e4] p-0 text-[12px] font-normal', r === 1 ? 'bg-[#e1e1e1] text-[#217346]' : 'text-[#666]')}
              >
                {r}
              </th>
              {COLUMNS.map((c, i) => (r === 3 && i > 0 && i < 4 ? null : <Cell key={c} row={r} col={i} />))}
              <td className="p-0" />
            </tr>
          ))}
        </tbody>
      </table>
    </div>
    <div className="flex w-[18px] flex-col items-center bg-[#f7f7f7]">
      <ScrollButton label="위로 스크롤" d="M4 2 7.500 6h-7z" />
      <div className="h-[57px] w-[15px] border border-t-0 border-[#b5b5b5] bg-white" />
      <ScrollButton label="아래로 스크롤" d="M.5 2h7L4 6z" className="mt-auto" />
    </div>
    {/* floating shape anchored near G12 */}
    <div className="absolute top-[227px] left-[441px] flex h-[92px] w-[148px] items-center justify-center border-2 border-[#3b4a5c] bg-[#ffd966] text-[46px] leading-none font-light text-white">
      예시
    </div>
  </main>
);

const RED_TABS = ['3.SUM', '4.SUMIF', '5.SUMIFS', '6.ROUND', '7.ROUNDUP', '8.ROUNDDOWN'];

const SheetTabs = () => (
  <div className="flex h-[22px] items-center bg-[#f7f7f7] text-[#555]">
    <button type="button" aria-label="이전 시트" className="ml-5">
      <svg width="6" height="8" viewBox="0 0 6 8"><path d="M5 0v8L1 4z" fill="#b5b5b5" /></svg>
    </button>
    <button type="button" aria-label="다음 시트" className="ml-4">
      <svg width="6" height="8" viewBox="0 0 6 8"><path d="M1 0v8l4-4z" fill="#217346" /></svg>
    </button>
    <span className="ml-[29px] h-4 w-px bg-[#c4c4c4]" />
    <button type="button" className="h-full w-[42px] pb-1 text-[13px] leading-[18px]">목차</button>
    <button type="button" className="h-full w-[88px] border-x border-[#c9c9c9] pb-[3px]">
      <span className="block h-[19px] border-b-2 border-[#217346] bg-linear-to-b from-white to-[#f9a3a3] leading-[17px] text-[#217346]">1.VLOOKUP</span>
    </button>
    <button type="button" className="h-full w-[88px] pb-1 leading-[18px]">2.HLOOKUP</button>
    <div className="flex h-full gap-1 bg-white px-[2px]">
      {RED_TABS.map((name) => (
        <button key={name} type="button" className="mt-[2px] h-[17px] bg-[#f00] px-[9px] pb-[3px] leading-[14px] text-white">{name}</button>
      ))}
    </div>
    <button type="button" className="ml-[10px] h-full pb-1 leading-[18px]">9.I</button>
    <span className="ml-2 font-bold text-[#217346]">...</span>
    <button type="button" aria-label="새 시트" className="ml-2">
      <svg width="15" height="15" viewBox="0 0 15 15" fill="none" stroke="#777"><circle cx="7.500" cy="7.500" r="6.900" /><path d="M7.500 3.500v8M3.500 7.500h8" strokeWidth="1.800" /></svg>
    </button>
    <svg className="ml-[13px]" width="3" height="11" viewBox="0 0 3 11" fill="#aaa"><path d="M0 0h2v2H0zM0 3h2v2H0zM0 6h2v2H0zM0 9h2v2H0z" /></svg>
    <div className="mr-[18px] ml-3 flex flex-1">
      <ScrollButton label="왼쪽으로 스크롤" d="M6 .5v7L2 4z" />
      <div className="mr-[22px] h-[15px] flex-1 border border-l-0 border-[#b5b5b5] bg-white" />
      <ScrollButton label="오른쪽으로 스크롤" d="M2 .5v7L6 4z" />
    </div>
  </div>
);

const StatusBar = () => (
  <footer className="flex h-5 items-center bg-[#217346] pl-[7px] whitespace-nowrap text-white">
    <span>준비</span>
    <svg className="ml-5" width="12" height="12" viewBox="0 0 12 12" fill="#fff"><circle cx="2.500" cy="2.500" r="2.500" /><path d="M5 1h7v2H5zM1 5h11v7H1z" /><path d="M2 7h9M2 9h9M5 5v7M8 5v7" stroke="#217346" strokeWidth=".5" /></svg>
    <button type="button" className="ml-4 flex items-center gap-[2px] font-bold">
      <svg width="15" height="14" viewBox="0 0 15 14" fill="none" stroke="#fff"><path d="M6 1.500a5.500 5.500 0 0 0-2 9.500" strokeDasharray="3 1.500" /><circle cx="9" cy="3.500" r="1" fill="#fff" /><path d="M5.500 6h7M9 6v3l-2.500 4M9 9l2 2.500M10 9l4 4M14 9l-4 4" strokeWidth="1.400" /></svg>
      접근성: 조사 필요
    </button>
    <button type="button" className="ml-auto flex items-center gap-[2px]">
      <svg width="15" height="14" viewBox="0 0 15 14" fill="#fff"><path d="M0 1h14v6a4 4 0 0 0-6 3H5v2H3v-2H0z" /><circle cx="11" cy="10" r="2.500" fill="none" stroke="#fff" strokeWidth="2" strokeDasharray="1.500 .7" /></svg>
      디스플레이 설정
    </button>
    <button type="button" aria-label="기본" className="ml-[18px] flex h-5 w-[37px] items-center justify-center bg-[#0d4a22]">
      <svg width="13" height="13" viewBox="0 0 13 13" fill="none" stroke="#cfe3d6"><path d="M.5.5h12v12H.5zM4.500.5v12M8.500.5v12M.5 4.500h12M.5 8.500h12" /></svg>
    </button>
    <button type="button" aria-label="페이지 레이아웃" className="flex h-5 w-[37px] items-center justify-center">
      <svg width="13" height="13" viewBox="0 0 13 13" fill="none" stroke="#cfe3d6"><path d="M.5.5h12v12H.5zM3.500 2.500h6v8h-6zM5 4.500h3M5 6.500h3M5 8.500h3" /></svg>
    </button>
    <button type="button" aria-label="페이지 나누기 미리 보기" className="flex h-5 w-[37px] items-center justify-center">
      <svg width="13" height="13" viewBox="0 0 13 13" fill="none" stroke="#cfe3d6"><path d="M.5.5h12v12H.5z" /><path d="M0 0h4v8H0zM5 0h4v8H5z" fill="#fff" stroke="none" /></svg>
    </button>
    <button type="button" aria-label="축소" className="ml-[6px]">
      <svg width="8" height="8" viewBox="0 0 8 8" stroke="#fff"><path d="M0 4.500h8" /></svg>
    </button>
    <input
      type="range"
      aria-label="확대/축소"
      defaultValue={50}
      className="mx-1 h-px w-[94px] appearance-none bg-[#cfe3d6] [&::-webkit-slider-thumb]:h-[11px] [&::-webkit-slider-thumb]:w-1 [&::-webkit-slider-thumb]:appearance-none [&::-webkit-slider-thumb]:bg-white"
    />
    <button type="button" aria-label="확대">
      <svg width="8" height="8" viewBox="0 0 8 8" stroke="#fff"><path d="M0 4.500h8M4 .5v8" /></svg>
    </button>
    <span className="w-[46px] pr-[7px] text-right">100%</span>
  </footer>
);

const App = () => (
  <div className="flex min-h-screen flex-col bg-white font-['Noto_Sans','Noto_Sans_CJK_KR',sans-serif] text-[12px] leading-4 text-[#333]">
    <TitleBar />
    <MenuTabs />
    <Ribbon />
    <FormulaBar />
    <Sheet />
    <SheetTabs />
    <StatusBar />
  </div>
);

export default App;
